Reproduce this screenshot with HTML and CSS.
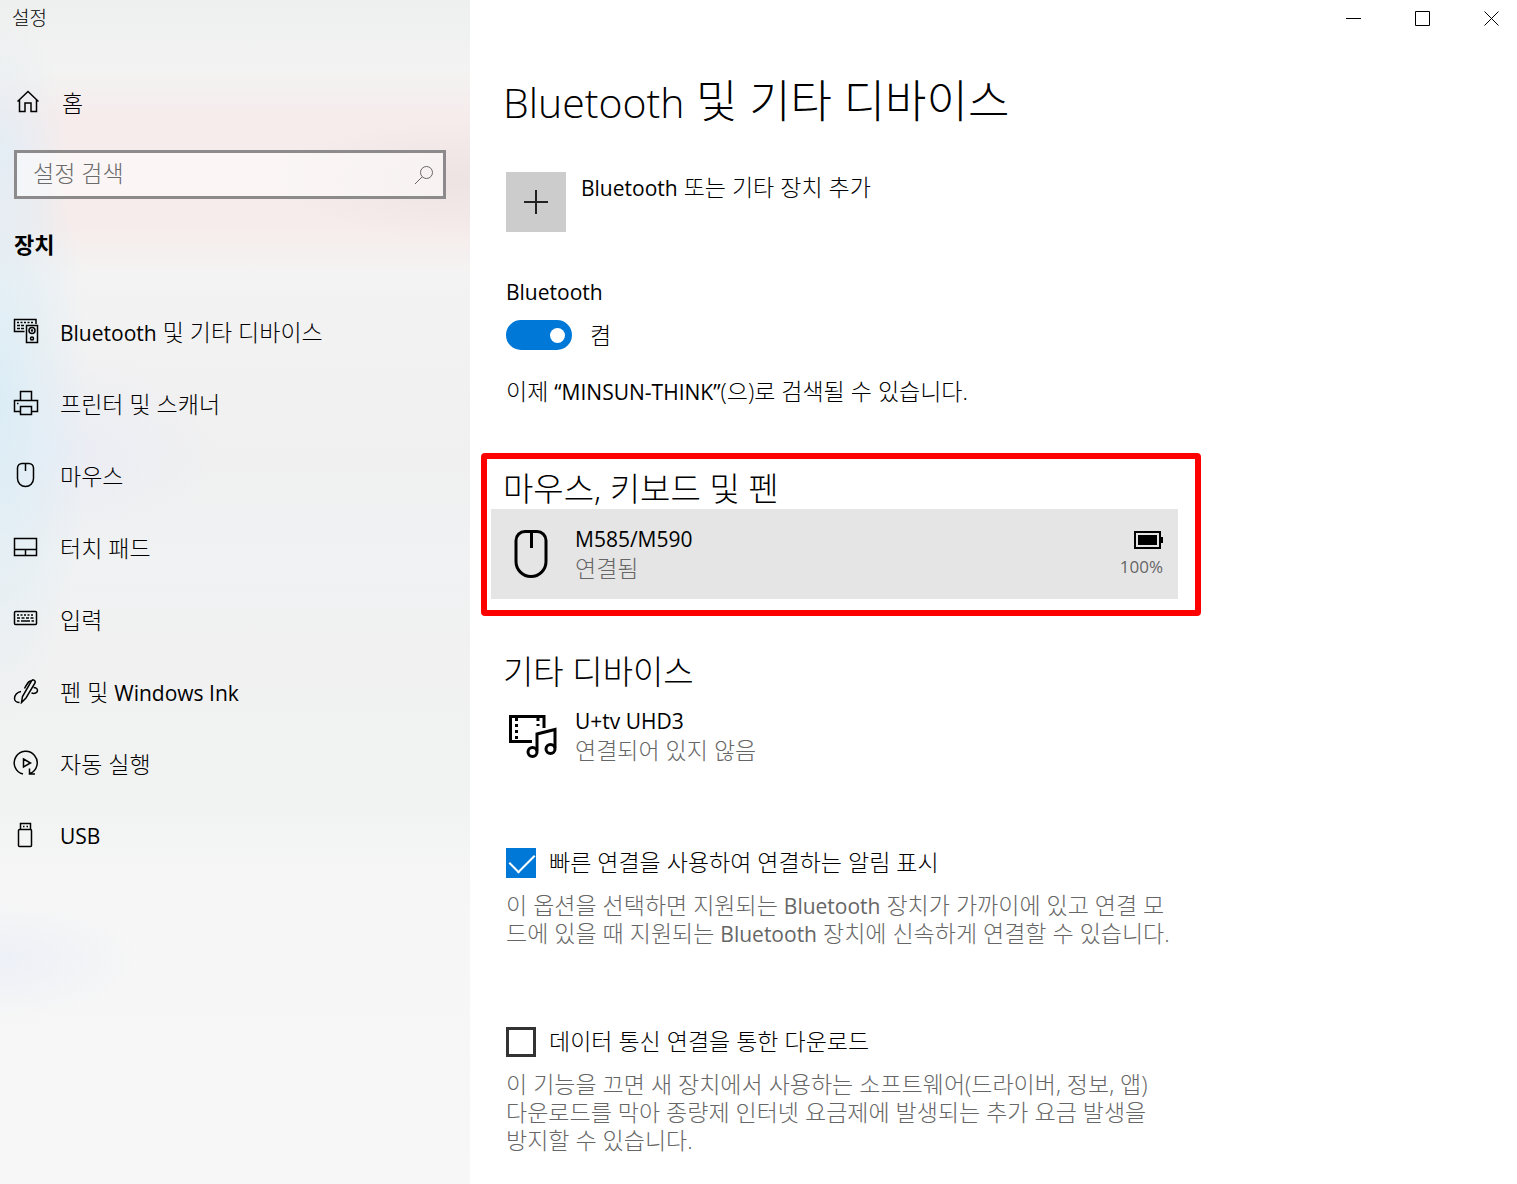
FILE: index.html
```html
<!DOCTYPE html>
<html lang="ko">
<head>
    <meta charset="UTF-8">
    <meta name="viewport" content="width=device-width, initial-scale=1.0">
    <title>설정</title>
    <link rel="stylesheet" href="styles.css">
</head>
<body>
<div class="window">
    <aside class="sidebar">
        <div class="app-title">설정</div>

        <a class="nav-link home" href="#">
            <svg class="icon" viewBox="0 0 26 26"><path d="M4.500 12.500L15 2.500l10.500 10M6.500 10.500v12H12V14h6v8.500h5.500v-12"/></svg>
            <span>홈</span>
        </a>

        <div class="search">
            <input type="search" placeholder="설정 검색" aria-label="설정 검색">
            <svg class="search-icon" viewBox="0 0 20 20"><circle cx="12.500" cy="7.500" r="6"/><path d="M8 12L1 19"/></svg>
        </div>

        <h2 class="nav-title">장치</h2>

        <nav>
            <a class="nav-link" href="#">
                <svg class="icon" viewBox="0 0 26 26">
                    <path d="M11.500 13.500h-10v-12H23V6"/>
                    <path d="M4 4.500h17" stroke-dasharray="2 1.500"/>
                    <path d="M4 7.500h7M4 10.500h7" stroke-dasharray="3 1"/>
                    <path d="M13.500 7.500h11v17h-11z"/>
                    <circle cx="19" cy="12.500" r="3"/><circle cx="19" cy="12.500" r=".5"/><circle cx="19" cy="20.500" r="1.500"/>
                </svg>
                <span><span class="latin">Bluetooth</span> 및 기타 디바이스</span>
            </a>
            <a class="nav-link" href="#">
                <svg class="icon" viewBox="0 0 26 26"><path d="M7.500 10.500v-9h11v9M7.500 21.500h-6v-11h23v11h-6M7.500 16.500h11v8h-11zM4 13.500h1.500"/></svg>
                <span>프린터 및 스캐너</span>
            </a>
            <a class="nav-link" href="#">
                <svg class="icon" viewBox="0 0 26 26"><path d="M9 1.500h7a4.500 4.500 0 0 1 4.500 4.500v10.500a8 8 0 0 1-16 0V6A4.500 4.500 0 0 1 9 1.500zM12.500 1.500V9"/></svg>
                <span>마우스</span>
            </a>
            <a class="nav-link" href="#">
                <svg class="icon" viewBox="0 0 26 26"><path d="M1.500 4.500h22v17h-22zM1.500 15.500h22M12.500 15.500v6"/></svg>
                <span>터치 패드</span>
            </a>
            <a class="nav-link" href="#">
                <svg class="icon" viewBox="0 0 26 26">
                    <rect x="1.500" y="5.500" width="22" height="13" rx="1"/>
                    <path d="M4 9h17" stroke-dasharray="2 1.500"/>
                    <path d="M4 12h17" stroke-dasharray="3 1.500"/>
                    <path d="M4 15h2.500M8 15h9M18.500 15H21"/>
                </svg>
                <span>입력</span>
            </a>
            <a class="nav-link" href="#">
                <svg class="icon" viewBox="0 0 26 26">
                    <path d="M8.500 24.500l1-6L18.500 3c1-2 4.500-1 3.500 2L13 20z"/>
                    <path d="M18.500 3c-2-.5-3.500 1-7 7.500M8 13.500c-4 .5-6.500 4-6.500 7 0 2.500 2.500 4 5 4M20.500 9.500c3 0 4 2 4 3 0 2.500-3 3.500-6 2.500"/>
                </svg>
                <span>펜 및 <span class="latin">Windows Ink</span></span>
            </a>
            <a class="nav-link" href="#">
                <svg class="icon" viewBox="0 0 26 26"><path d="M10 24A11.500 11.500 0 1 1 17 23.500M16.500 18.500v5.500H22M10.500 9l7 4-7 4z"/></svg>
                <span>자동 실행</span>
            </a>
            <a class="nav-link" href="#">
                <svg class="icon" viewBox="0 0 26 26"><path d="M7.500 7.500v-6h10v6M10 4.500h1.500M13.500 4.500H15"/><rect x="5.500" y="7.500" width="13" height="17" rx="1"/></svg>
                <span class="latin">USB</span>
            </a>
        </nav>
    </aside>

    <main class="main">
        <div class="window-controls">
            <button type="button" aria-label="최소화"><svg viewBox="0 0 15 15"><path d="M0 7.500h15"/></svg></button>
            <button type="button" aria-label="최대화"><svg viewBox="0 0 15 15"><path d="M.5.5h14v14H.5z"/></svg></button>
            <button type="button" aria-label="닫기"><svg viewBox="0 0 15 15"><path d="M.5.5l14 14M14.500.5l-14 14"/></svg></button>
        </div>

        <div class="content">
            <h1><span class="title-latin">Bluetooth</span> 및 기타 디바이스</h1>

            <button type="button" class="add-device">
                <span class="add-icon"><svg viewBox="0 0 24 24"><path d="M12 0v24M0 12h24"/></svg></span>
                <span><span class="latin">Bluetooth</span> 또는 기타 장치 추가</span>
            </button>

            <section class="bluetooth">
                <label for="bt" class="latin">Bluetooth</label>
                <div class="toggle-row">
                    <input type="checkbox" role="switch" id="bt" class="toggle" checked>
                    <span>켬</span>
                </div>
                <p>이제 <span class="latin">“MINSUN-THINK”</span>(으)로 검색될 수 있습니다.</p>
            </section>

            <section class="highlight">
                <h2>마우스, 키보드 및 펜</h2>
                <div class="device selected">
                    <svg class="device-icon" viewBox="0 0 50 50"><path d="M17 2.500h12a9 9 0 0 1 9 9v21a15 15 0 0 1-30 0v-21a9 9 0 0 1 9-9zM23.500 2.500V19"/></svg>
                    <div class="device-text">
                        <div class="latin">M585/M590</div>
                        <div class="muted">연결됨</div>
                    </div>
                    <div class="battery">
                        <svg viewBox="0 0 29 18"><path d="M1 1h25v16H1z"/><path class="fill" d="M4 4h19v10H4zM27 6h2v6h-2z"/></svg>
                        <div>100%</div>
                    </div>
                </div>
            </section>

            <section class="other">
                <h2>기타 디바이스</h2>
                <div class="device">
                    <svg class="device-icon" viewBox="0 0 50 50">
                        <path d="M24 30.500H2.500V5.500H36V17"/>
                        <path d="M8.500 7v23M30 7v8" stroke-dasharray="3 3"/>
                        <path d="M29 40V23l18-4.500V37"/>
                        <circle cx="24.500" cy="41" r="4.500"/><circle cx="42.500" cy="38" r="4.500"/>
                    </svg>
                    <div class="device-text">
                        <div class="latin">U+tv UHD3</div>
                        <div class="muted">연결되어 있지 않음</div>
                    </div>
                </div>
            </section>

            <section class="option">
                <label><input type="checkbox" class="check" checked>빠른 연결을 사용하여 연결하는 알림 표시</label>
                <p>이 옵션을 선택하면 지원되는 <span class="latin">Bluetooth</span> 장치가 가까이에 있고 연결 모<br>드에 있을 때 지원되는 <span class="latin">Bluetooth</span> 장치에 신속하게 연결할 수 있습니다.</p>
            </section>

            <section class="option">
                <label><input type="checkbox" class="check">데이터 통신 연결을 통한 다운로드</label>
                <p>이 기능을 끄면 새 장치에서 사용하는 소프트웨어(드라이버, 정보, 앱)<br>다운로드를 막아 종량제 인터넷 요금제에 발생되는 추가 요금 발생을<br>방지할 수 있습니다.</p>
            </section>
        </div>
    </main>
</div>
</body>
</html>
```

FILE: styles.css
```css
* {
    box-sizing: border-box;
}

body {
    margin: 0;
    background: #fff;
    color: #000;
    font-family: "Open Sans", "Noto Sans CJK KR", sans-serif;
    font-size: 23px;
    font-weight: 300;
    line-height: 28px;
}

h1, h2, p {
    margin: 0;
}

h1, h2 {
    font-weight: 300;
}

button, input {
    font: inherit;
    color: inherit;
}

button {
    padding: 0;
    border: none;
    background: none;
}

svg {
    display: block;
    flex: none;
    fill: none;
    stroke: #000;
}

/* Latin words run a little smaller and heavier than the Hangul */
.latin {
    font-size: 21px;
    font-weight: 400;
}

.title-latin {
    font-size: 41px;
}

span.latin, .title-latin {
    line-height: 1;
}

.window {
    display: grid;
    grid-template-columns: 470px 1fr;
    min-height: 100vh;
}

/* Sidebar */
.sidebar {
    padding: 0 24px 0 14px;
    background:
        radial-gradient(90px 320px at 0 400px, #dcedf6, rgba(220,237,246,0)),
        radial-gradient(70px 130px at 0 150px, #e6edf4, rgba(230,237,244,0)),
        radial-gradient(160px 100px at 60px 450px, #ebedf5, rgba(235,237,245,0)),
        radial-gradient(200px 60px at 470px 180px, #eee3e3, rgba(238,227,227,0)),
        radial-gradient(140px 60px at 0 960px, #edf0f7, rgba(237,240,247,0)),
        linear-gradient(#eeefef, #f2f3f2 70px, #f6ecec 115px, #f6eceb 225px, #f4f3f3 275px, #f0f0f0 460px, #f0f2f3 560px, #f1f1f1 640px, #f1f2f2 800px, #f6f6f6 880px, #f7f7f7);
}

.app-title {
    height: 36px;
    margin-left: -2px;
    font-size: 19px;
    line-height: 36px;
}

.nav-link {
    display: flex;
    align-items: center;
    gap: 20px;
    height: 72px;
    color: #000;
    text-decoration: none;
}

.home {
    margin: 31px 0 11px;
    gap: 22px;
}

.icon {
    width: 26px;
    height: 26px;
    margin: 0 1px 2px -1px;
    stroke-width: 1.5;
}

.search {
    display: flex;
    align-items: center;
    height: 49px;
    padding: 0 9px 0 16px;
    border: 3px solid #8d8a8b;
    background: rgba(255,255,255,0.5);
}

.search input {
    flex: 1;
    min-width: 0;
    padding: 0 0 4px;
    border: none;
    outline: none;
    background: none;
}

.search input::placeholder {
    color: #6b6b6b;
}

.search-icon {
    width: 20px;
    height: 20px;
    stroke: #666;
}

.nav-title {
    margin: 31px 0 38px;
    font-size: 22px;
    font-weight: 700;
}

/* Main area */
.window-controls {
    display: flex;
    justify-content: flex-end;
    gap: 17px;
    height: 36px;
}

.window-controls button {
    display: flex;
    align-items: center;
    justify-content: center;
    width: 52px;
}

.window-controls svg {
    width: 15px;
    height: 15px;
}

.content {
    max-width: 742px;
    padding: 35px 36px 30px;
}

h1 {
    font-size: 45px;
    line-height: 60px;
}

.content h1, .content h2 {
    margin-left: -3px;
}

.content h2 {
    font-size: 33px;
    line-height: 40px;
}

.add-device {
    display: flex;
    gap: 15px;
    margin-top: 41px;
    line-height: 30px;
}

.add-icon {
    display: flex;
    align-items: center;
    justify-content: center;
    width: 60px;
    height: 60px;
    background: #ccc;
}

.add-icon svg {
    width: 24px;
    height: 24px;
    stroke: #222;
    stroke-width: 2;
}

.bluetooth {
    margin-top: 46px;
}

.bluetooth label {
    display: block;
}

.toggle-row {
    display: flex;
    align-items: center;
    gap: 18px;
    margin: 14px 0 27px;
}

.toggle {
    appearance: none;
    display: flex;
    align-items: center;
    justify-content: flex-end;
    width: 66px;
    height: 30px;
    margin: 0;
    padding: 0 7px;
    border-radius: 15px;
    background: #0078d7;
}

.toggle::after {
    content: "";
    width: 15px;
    height: 15px;
    border-radius: 50%;
    background: #fff;
}

.highlight {
    margin: 48px -25px 0;
    padding: 10px 17px 11px 4px;
    border: 6px solid #f00;
    border-radius: 4px;
}

.highlight h2 {
    padding-left: 15px;
}

.device {
    display: flex;
    align-items: flex-start;
}

.selected {
    height: 90px;
    padding: 16px 15px;
    background: #e5e5e5;
}

.device-icon {
    width: 50px;
    height: 50px;
    margin: 4px 17px 0 2px;
    stroke-width: 3;
}

.device-text {
    flex: 1;
    line-height: 29px;
}

.muted, .battery {
    color: #666;
}

.battery {
    display: flex;
    flex-direction: column;
    align-items: flex-end;
    padding-top: 6px;
    font-size: 17px;
    font-weight: 400;
}

.battery svg {
    width: 29px;
    height: 18px;
    margin-bottom: 4px;
    stroke-width: 2;
}

.battery .fill {
    fill: #000;
    stroke: none;
}

.other {
    margin: 36px 0 83px;
}

.other .device {
    margin-top: 15px;
}

.option {
    margin-top: 80px;
}

.option label {
    display: flex;
    gap: 13px;
}

.option p {
    margin-top: 13px;
    color: #666;
    white-space: nowrap;
}

.check {
    appearance: none;
    width: 30px;
    height: 30px;
    margin: 0;
    border: 3px solid #333;
}

.check:checked {
    padding: 5px 4px;
    border: none;
    background: #0078d7;
}

.check:checked::after {
    content: "";
    display: block;
    width: 22px;
    height: 12px;
    border: solid #fff;
    border-width: 0 0 2px 2px;
    transform: rotate(-45deg);
}
```
